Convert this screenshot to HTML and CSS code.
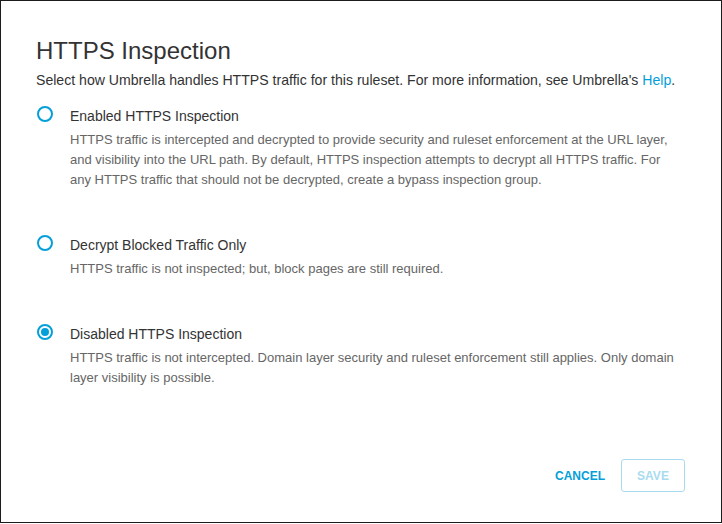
FILE: index.html
```html
<!DOCTYPE html>
<html>
<head>
<meta charset="utf-8">
<link rel="stylesheet" href="styles.css">
</head>
<body>
<div class="dialog">
  <h1 class="title">HTTPS Inspection</h1>
  <p class="intro">Select how Umbrella handles HTTPS traffic for this ruleset. For more information, see Umbrella's <a class="link" href="#">Help</a>.</p>
  <div class="options">
    <div class="option">
      <span class="radio"></span>
      <div class="option-body">
        <div class="label">Enabled HTTPS Inspection</div>
        <div class="desc">HTTPS traffic is intercepted and decrypted to provide security and ruleset enforcement at the URL layer, and visibility into the URL path. By default, HTTPS inspection attempts to decrypt all HTTPS traffic. For any HTTPS traffic that should not be decrypted, create a bypass inspection group.</div>
      </div>
    </div>
    <div class="option">
      <span class="radio"></span>
      <div class="option-body">
        <div class="label">Decrypt Blocked Traffic Only</div>
        <div class="desc">HTTPS traffic is not inspected; but, block pages are still required.</div>
      </div>
    </div>
    <div class="option">
      <span class="radio checked"></span>
      <div class="option-body">
        <div class="label">Disabled HTTPS Inspection</div>
        <div class="desc">HTTPS traffic is not intercepted. Domain layer security and ruleset enforcement still applies. Only domain layer visibility is possible.</div>
      </div>
    </div>
  </div>
  <div class="footer">
    <button class="btn btn-cancel">CANCEL</button>
    <button class="btn btn-save">SAVE</button>
  </div>
</div>
</body>
</html>
```
FILE: styles.css
```css
html, body {
  margin: 0;
  padding: 0;
  background: #ffffff;
}
body {
  font-family: "Liberation Sans", Arial, sans-serif;
  color: #333333;
}
.dialog {
  box-sizing: border-box;
  width: 722px;
  height: 523px;
  border: 1px solid #1c1c1c;
  padding: 35px 36px 0 35px;
  display: flex;
  flex-direction: column;
}
.title {
  margin: 0;
  font-size: 24px;
  font-weight: normal;
  line-height: 30px;
  color: #333333;
}
.intro {
  margin: 4px 0 0 0;
  font-size: 14.1px;
  line-height: 20px;
  color: #333333;
}
.link {
  color: #049fd9;
  text-decoration: none;
}
.options {
  margin-top: 16px;
  display: flex;
  flex-direction: column;
  gap: 45px;
}
.option {
  display: flex;
  align-items: flex-start;
}
.radio {
  box-sizing: border-box;
  flex: 0 0 auto;
  width: 16px;
  height: 16px;
  margin: 0 0 0 1px;
  border: 2px solid #049fd9;
  border-radius: 50%;
  display: flex;
  align-items: center;
  justify-content: center;
}
.radio.checked::after {
  content: "";
  width: 8px;
  height: 8px;
  border-radius: 50%;
  background: #049fd9;
}
.option-body {
  margin-left: 17px;
}
.label {
  font-size: 14px;
  line-height: 20px;
  color: #333333;
  margin-bottom: 4px;
}
.desc {
  max-width: 614px;
  font-size: 13px;
  line-height: 20px;
  color: #666666;
}
.footer {
  margin-top: auto;
  margin-bottom: 30px;
  display: flex;
  justify-content: flex-end;
  align-items: center;
  gap: 16px;
}
.btn {
  font-family: "Liberation Sans", Arial, sans-serif;
  font-size: 12px;
  font-weight: bold;
  background: #ffffff;
  cursor: pointer;
}
.btn-cancel {
  border: none;
  color: #049fd9;
  padding: 0;
}
.btn-save {
  box-sizing: border-box;
  width: 64px;
  height: 33px;
  border: 1px solid #a9dbf0;
  border-radius: 3px;
  color: #a9dbf0;
}
```
